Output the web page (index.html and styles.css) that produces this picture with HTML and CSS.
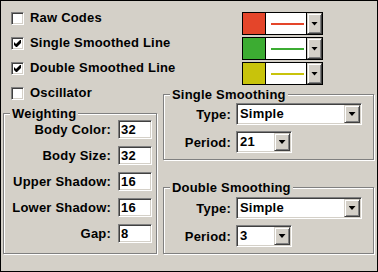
FILE: index.html
```html
<!DOCTYPE html>
<html lang="en">
<head>
    <meta charset="UTF-8">
    <title>Smoothing Settings</title>
    <link rel="stylesheet" href="styles.css">
</head>
<body>
    <div class="dialog">
        <div class="col-left">
            <ul class="checks">
                <li><span class="check"></span>Raw Codes</li>
                <li><span class="check"><svg width="7" height="7" viewBox="0 0 7 7"><polygon points="0,2 2,4 6,0 7,0 7,3 3,7 2,7 0,5"/></svg></span>Single Smoothed Line</li>
                <li><span class="check"><svg width="7" height="7" viewBox="0 0 7 7"><polygon points="0,2 2,4 6,0 7,0 7,3 3,7 2,7 0,5"/></svg></span>Double Smoothed Line</li>
                <li><span class="check"></span>Oscillator</li>
            </ul>

            <div class="group weighting">
                <span class="group-title">Weighting</span>
                <div class="fields">
                    <label>Body Color:</label><span class="edit">32</span>
                    <label>Body Size:</label><span class="edit">32</span>
                    <label>Upper Shadow:</label><span class="edit">16</span>
                    <label>Lower Shadow:</label><span class="edit">16</span>
                    <label>Gap:</label><span class="edit">8</span>
                </div>
            </div>
        </div>

        <div class="col-right">
            <div class="pickers">
                <div class="picker"><span class="swatch red"></span><span class="sample"><i class="red"></i></span><span class="btn"><b></b></span></div>
                <div class="picker"><span class="swatch green"></span><span class="sample"><i class="green"></i></span><span class="btn"><b></b></span></div>
                <div class="picker"><span class="swatch yellow"></span><span class="sample"><i class="yellow"></i></span><span class="btn"><b></b></span></div>
            </div>

            <div class="group smoothing single">
                <span class="group-title">Single Smoothing</span>
                <div class="fields">
                    <label>Type:</label>
                    <div class="combo wide"><span class="value">Simple</span><span class="btn"><b></b></span></div>
                    <label>Period:</label>
                    <div class="combo narrow"><span class="value">21</span><span class="btn"><b></b></span></div>
                </div>
            </div>

            <div class="group smoothing double">
                <span class="group-title">Double Smoothing</span>
                <div class="fields">
                    <label>Type:</label>
                    <div class="combo wide"><span class="value">Simple</span><span class="btn"><b></b></span></div>
                    <label>Period:</label>
                    <div class="combo narrow"><span class="value">3</span><span class="btn"><b></b></span></div>
                </div>
            </div>
        </div>
    </div>
</body>
</html>
```

FILE: styles.css
```css
* {
    box-sizing: border-box;
}
body {
    margin: 0;
    background-color: #d4d0c8;
    font: bold 13px "Liberation Sans", Arial, sans-serif;
    letter-spacing: 0.2px;
    color: #000;
}
.dialog {
    width: 378px;
    height: 272px;
    border: 1px solid #000;
    display: flex;
    gap: 6px;
    padding: 9px 0 0 2px;
}
.col-left {
    width: 154px;
    display: flex;
    flex-direction: column;
}
.col-right {
    width: 211px;
    display: flex;
    flex-direction: column;
}

/* checkboxes */
.checks {
    list-style: none;
    margin: 0 0 0 8px;
    padding: 0;
    display: flex;
    flex-direction: column;
    gap: 10px;
}
.checks li {
    display: flex;
    align-items: flex-start;
    gap: 6px;
    height: 15px;
    line-height: 15px;
    white-space: nowrap;
}
.check {
    flex: none;
    width: 13px;
    height: 13px;
    margin-top: 2px;
    background: #fff;
    border: 1px solid;
    border-color: #808080 #fff #fff #808080;
    box-shadow: inset 1px 1px 0 #404040, inset -1px -1px 0 #d4d0c8;
    display: flex;
    align-items: center;
    justify-content: center;
}
.check svg {
    display: block;
}

/* group boxes */
.group {
    position: relative;
    border: 1px solid #808080;
    box-shadow: 1px 1px 0 #fff, inset 1px 1px 0 #fff;
}
.group-title {
    position: absolute;
    top: -8px;
    left: 6px;
    padding: 0 2px;
    line-height: 15px;
    background-color: #d4d0c8;
    white-space: nowrap;
}
.weighting {
    margin-top: 13px;
    height: 141px;
    padding: 6px 0 0 0;
}
.weighting .fields {
    display: grid;
    grid-template-columns: 107px 34px;
    column-gap: 7px;
    row-gap: 7px;
    align-items: center;
}
.fields label {
    text-align: right;
    line-height: 15px;
    white-space: nowrap;
}

.edit {
    height: 19px;
    background: #fff;
    border: 1px solid;
    border-color: #808080 #fff #fff #808080;
    box-shadow: inset 1px 1px 0 #404040, inset -1px -1px 0 #d4d0c8;
    padding-left: 2px;
    line-height: 17px;
}

/* colour pickers */
.pickers {
    margin: 2px 0 0 79px;
    display: flex;
    flex-direction: column;
    gap: 2px;
}
.picker {
    width: 81px;
    height: 23px;
    border: 1px solid #000;
    display: flex;
}
.swatch {
    width: 23px;
    border-right: 1px solid #000;
}
.sample {
    width: 41px;
    background: #fff;
    border-right: 1px solid #000;
    padding: 10px 2px 0 5px;
}
.sample i {
    display: block;
    height: 2px;
}
.red { background-color: #e4452a; }
.green { background-color: #3cac32; }
.yellow { background-color: #c8c30b; }
.picker .btn {
    flex: 1;
}

/* buttons and combos */
.btn {
    background: #d4d0c8;
    border: 1px solid;
    border-color: #d4d0c8 #404040 #404040 #d4d0c8;
    box-shadow: inset 1px 1px 0 #fff, inset -1px -1px 0 #808080;
    display: flex;
    align-items: center;
    justify-content: center;
}
.btn b {
    width: 7px;
    height: 4px;
    background: #000;
    clip-path: polygon(0 0, 100% 0, 50% 100%);
}
.smoothing .fields {
    display: grid;
    grid-template-columns: 67px auto;
    column-gap: 5px;
    row-gap: 6px;
    align-items: center;
    justify-items: start;
}
.smoothing label {
    justify-self: end;
}
.single {
    margin-top: 9px;
    height: 66px;
    padding-top: 8px;
}
.double {
    margin-top: 27px;
    height: 67px;
    padding-top: 9px;
}
.combo {
    height: 22px;
    display: flex;
    background: #fff;
    border: 1px solid;
    border-color: #808080 #fff #fff #808080;
    box-shadow: inset 1px 1px 0 #404040, inset -1px -1px 0 #d4d0c8;
    padding: 1px;
}
.combo.wide { width: 126px; }
.combo.narrow { width: 56px; }
.combo .value {
    flex: 1;
    padding-left: 2px;
    line-height: 18px;
}
.combo .btn {
    width: 16px;
}
```
